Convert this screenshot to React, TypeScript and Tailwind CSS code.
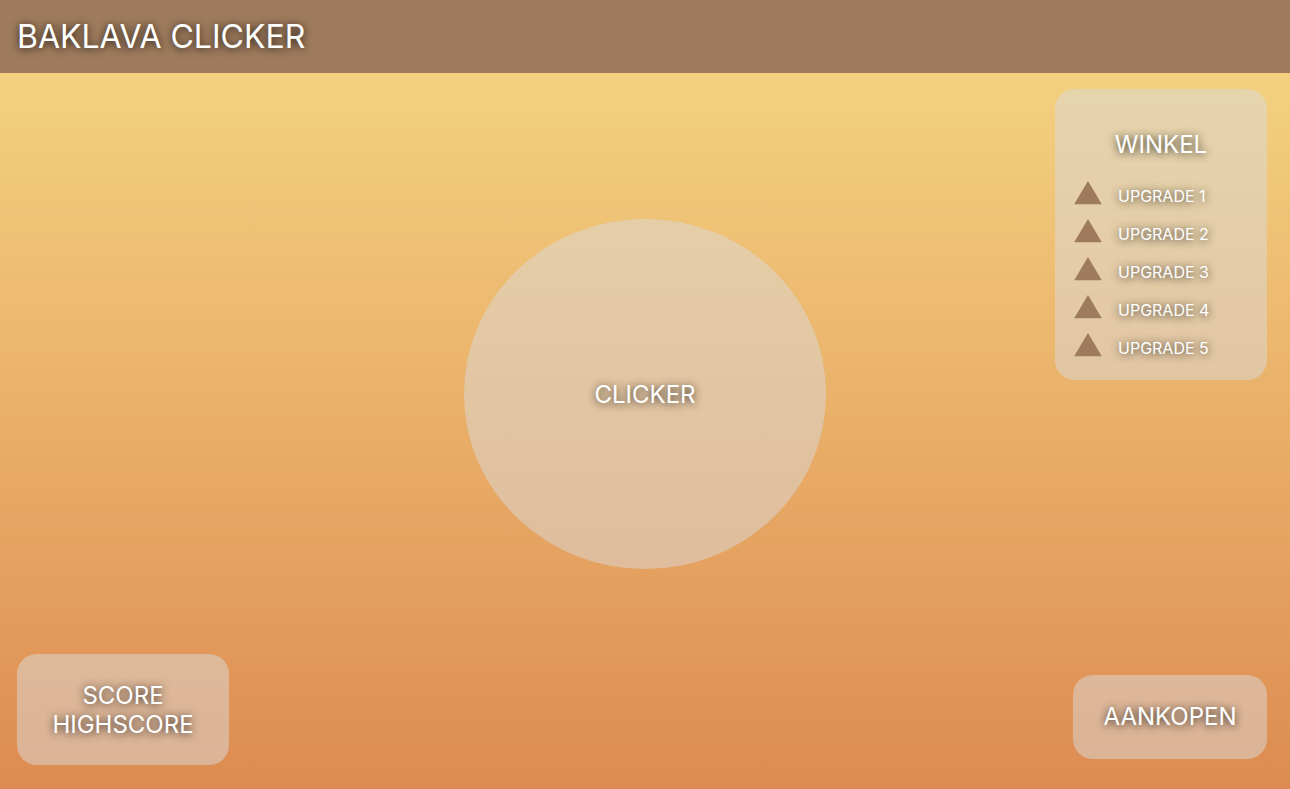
const shadow = "[text-shadow:0_1px_8px_rgba(0,0,0,0.85)]";

function Triangle() {
  return (
    <svg width="28" height="30" viewBox="0 0 28 30" className="shrink-0" aria-hidden="true">
      <path d="M14 0 27.8 23.3H0.2Z" fill="#9e7b5d" />
    </svg>
  );
}

export default function App() {
  return (
    <div className="flex min-h-screen flex-col bg-[#9e7b5d] font-[Inter,sans-serif] font-normal text-white">
      <header className="flex h-[73px] items-center px-[17px]">
        <h1 className={`text-[32px] leading-10 ${shadow}`}>BAKLAVA CLICKER</h1>
      </header>
      <main className="grid flex-1 grid-cols-[212px_1fr_212px] bg-linear-to-b from-[#f3d180] to-[#dd8b51] pt-4 pr-[23px] pb-6 pl-[17px]">
        <section className="flex h-[111px] flex-col items-center justify-center self-end rounded-[20px] bg-[#d9d9d9]/50 text-2xl leading-[29px]">
          <p className={shadow}>SCORE</p>
          <p className={shadow}>HIGHSCORE</p>
        </section>
        <div className="flex items-start justify-center pt-[130px] pl-[6px]">
          <button type="button" className="h-[350px] w-[362px] rounded-[50%] bg-[#d9d9d9]/50 pt-[2px] text-2xl leading-[30px]">
            <span className={shadow}>CLICKER</span>
          </button>
        </div>
        <aside className="flex flex-col items-end justify-between pb-[6px]">
          <section className="h-[291px] w-full rounded-[20px] bg-[#d9d9d9]/50 px-[19px] pt-10">
            <h2 className={`text-center text-2xl leading-8 ${shadow}`}>WINKEL</h2>
            <ul className="mt-4 flex flex-col">
              {[1, 2, 3, 4, 5].map((n) => (
                <li key={n}>
                  <button type="button" className="flex h-[38px] items-center gap-4 text-base">
                    <Triangle />
                    <span className={shadow}>UPGRADE {n}</span>
                  </button>
                </li>
              ))}
            </ul>
          </section>
          <button type="button" className="h-[84px] w-[194px] rounded-[20px] bg-[#d9d9d9]/50 text-2xl leading-[30px]">
            <span className={shadow}>AANKOPEN</span>
          </button>
        </aside>
      </main>
    </div>
  );
}
